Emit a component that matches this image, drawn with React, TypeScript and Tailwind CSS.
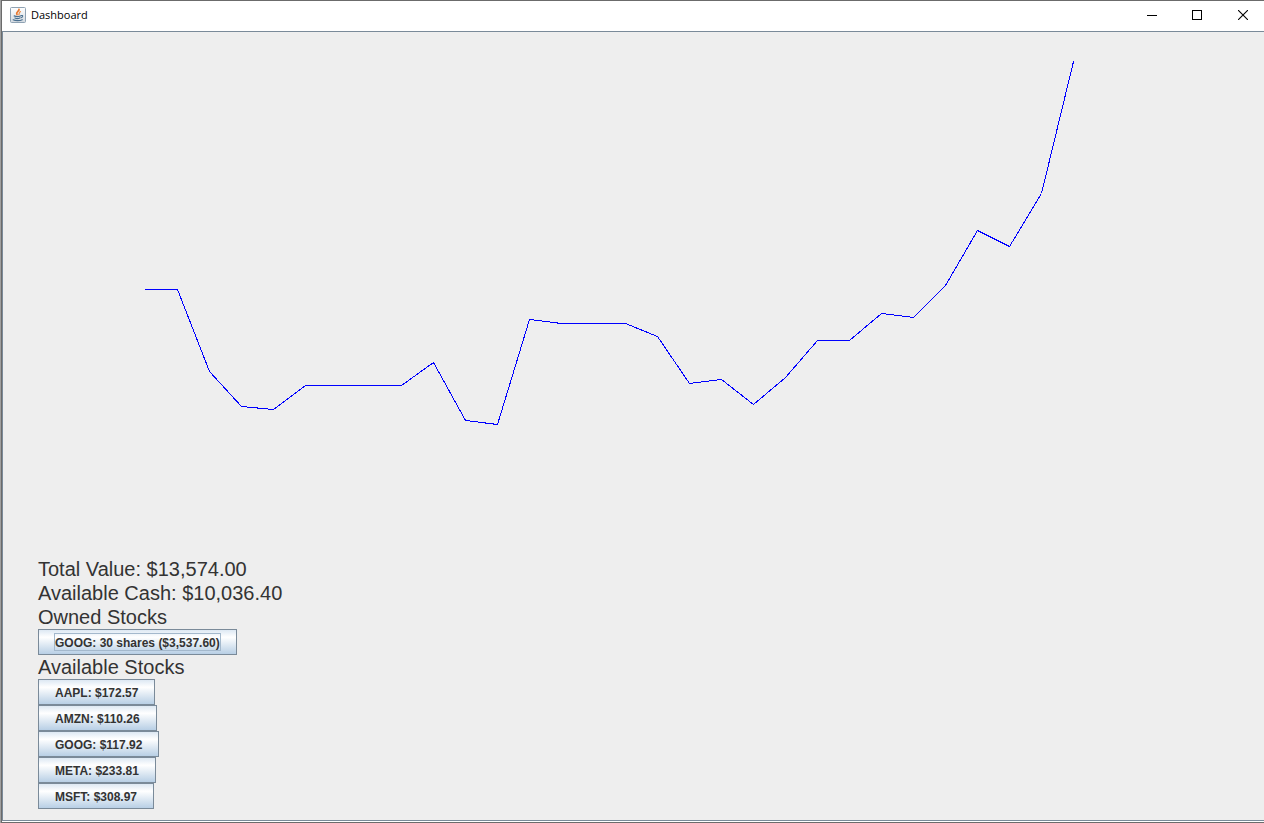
import React from "react";
import clsx from "clsx";

// portfolio value history, in panel pixels
const history = [
  257, 257, 339, 374, 377, 353, 353, 353, 353, 330, 388, 392, 287, 291, 291,
  291, 304, 351, 347, 372, 345, 308, 308, 281, 285, 253, 198, 214, 161, 29,
];
const START_X = 142;
const STEP_X = 32;

const owned = [{ symbol: "GOOG", label: "GOOG: 30 shares ($3,537.60)" }];

const available = [
  { symbol: "AAPL", price: "$172.57" },
  { symbol: "AMZN", price: "$110.26" },
  { symbol: "GOOG", price: "$117.92" },
  { symbol: "META", price: "$233.81" },
  { symbol: "MSFT", price: "$308.97" },
];

const JavaIcon = () => (
  <svg viewBox="0 0 16 16" className="h-4 w-4" aria-hidden="true">
    <defs>
      <linearGradient id="tile" x1="0" y1="0" x2="0" y2="1">
        <stop offset="0" stopColor="#ffffff" />
        <stop offset="1" stopColor="#d3dae0" />
      </linearGradient>
    </defs>
    <rect x="0.5" y="0.5" width="15" height="15" rx="1" fill="url(#tile)" stroke="#8fa2b3" />
    <g fill="none" strokeLinecap="round">
      <path d="M9 2.4C9.4 4.4 5.4 5 7 7.6" stroke="#e8772e" strokeWidth="1.7" />
      <path d="M10.4 4.6C8.4 5.4 9.8 6.4 8.8 7.8" stroke="#ee9350" strokeWidth="1.3" />
      <path d="M4.2 8.9C6 9.7 8.8 9.6 10.4 9" stroke="#4b7090" strokeWidth="1.3" />
      <path d="M5 11C6.4 11.7 8.6 11.6 9.8 11" stroke="#4b7090" strokeWidth="1.2" />
      <path d="M11.2 8.6C13.4 8 13 10.2 11 10.8" stroke="#4b7090" strokeWidth="1.1" />
      <path d="M3.2 12.8C5.6 14 10 13.9 12.2 12.7" stroke="#4b7090" strokeWidth="1.2" />
    </g>
  </svg>
);

const TitleBar = () => (
  <header className="flex h-[30px] items-center justify-between bg-white pb-0.5 pl-2">
    <div className="flex items-center gap-[5px]">
      <JavaIcon />
      <h1 className="font-['Open_Sans','Noto_Sans',sans-serif] text-[11px] leading-4 text-black">
        Dashboard
      </h1>
    </div>
    <div className="flex h-full">
      <button aria-label="Minimize" className="flex w-10 items-center justify-center">
        <svg width="10" height="10" shapeRendering="crispEdges">
          <path d="M0 5.5H10" stroke="#000" />
        </svg>
      </button>
      <button aria-label="Maximize" className="flex w-[50px] items-center justify-center">
        <svg width="10" height="10" shapeRendering="crispEdges">
          <rect x="0.5" y="0.5" width="9" height="9" fill="none" stroke="#000" />
        </svg>
      </button>
      <button aria-label="Close" className="flex w-[42px] items-center justify-center">
        <svg width="10" height="10">
          <path d="M0 0L10 10M10 0L0 10" stroke="#000" strokeWidth="1.1" />
        </svg>
      </button>
    </div>
  </header>
);

const ValueChart = () => {
  const points = history
    .map((y, i) => `${START_X + i * STEP_X + 0.5},${y + 0.5}`)
    .join(" ");

  return (
    <svg
      role="img"
      aria-label="Portfolio value"
      className="h-[525px] w-full"
      shapeRendering="crispEdges"
    >
      <polyline points={points} fill="none" stroke="#0000ff" strokeLinecap="square" />
    </svg>
  );
};

type StockButtonProps = {
  label: string;
  focused?: boolean;
};

const StockButton = ({ label, focused }: StockButtonProps) => (
  <button className="h-[26px] border border-[#7a8a99] bg-linear-to-b from-[#dde8f3] via-white via-30% to-[#b8cfe5] px-[15px] text-[12px] leading-[14px] font-bold text-[#333333]">
    <span
      className={clsx(
        "block border pt-0.5",
        focused ? "border-[#a3b8cc]" : "border-transparent"
      )}
    >
      {label}
    </span>
  </button>
);

const App = () => {
  return (
    <div className="border-l border-[#a0a0a0]">
      <div className="flex min-h-screen flex-col border-t border-l border-[#6b6b6b] bg-white font-['Liberation_Sans',Arial,sans-serif]">
        <TitleBar />
        <main className="mb-px flex-1 border-y border-l border-[#7a8a99] bg-[#eeeeee]">
          <ValueChart />
          <section className="flex flex-col items-start pb-[11px] pl-[35px] text-[20px] leading-6 text-[#333333]">
            <p>Total Value: $13,574.00</p>
            <p>Available Cash: $10,036.40</p>
            <h2>Owned Stocks</h2>
            {owned.map((stock) => (
              <StockButton key={stock.symbol} label={stock.label} focused />
            ))}
            <h2>Available Stocks</h2>
            {available.map((stock) => (
              <StockButton
                key={stock.symbol}
                label={`${stock.symbol}: ${stock.price}`}
              />
            ))}
          </section>
        </main>
        <div className="h-px bg-[#6b6b6b]" />
      </div>
    </div>
  );
};

export default App;
